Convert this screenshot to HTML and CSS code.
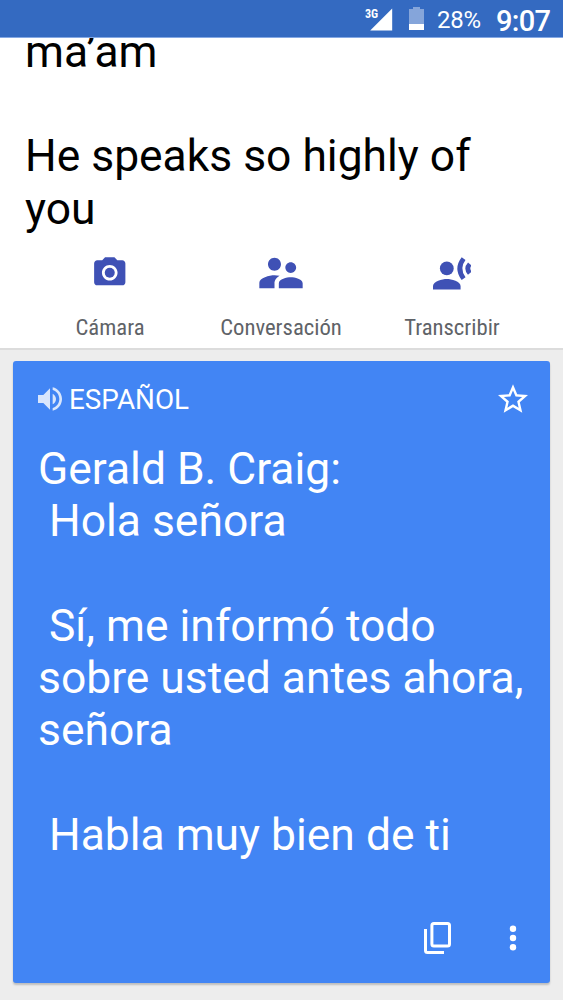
FILE: index.html
```html
<!DOCTYPE html>
<html lang="es">
<head>
<meta charset="utf-8">
<title>Traductor</title>
<link rel="stylesheet" href="styles.css">
</head>
<body>
<header class="status">
  <svg class="signal" viewBox="0 0 28 24"><path d="M27.2 .4v22H5.2z" fill="#fff"/><text class="net" x="0" y="10" textLength="13.2" lengthAdjust="spacingAndGlyphs">3G</text></svg>
  <svg class="battery" viewBox="0 0 15 23"><path d="M4 0h7v2h4v15H0V2h4z" fill="#fff" fill-opacity=".4"/><path d="M0 17h15v6H0z" fill="#fff"/></svg>
  <span class="percent">28%</span>
  <span class="clock">9:07</span>
</header>
<section class="source">
  <p class="source-text">ma’am

He speaks so highly of you</p>
  <nav class="tools">
    <div class="tool">
      <div class="tool-icon"><svg class="camera" viewBox="0 0 24 24"><circle cx="12" cy="12" r="3.2"/><path d="M9 2 7.17 4H4c-1.1 0-2 .9-2 2v12c0 1.1.9 2 2 2h16c1.1 0 2-.9 2-2V6c0-1.1-.9-2-2-2h-3.17L15 2H9zm3 15c-2.76 0-5-2.24-5-5s2.24-5 5-5 5 2.24 5 5-2.24 5-5 5z"/></svg></div>
      <span class="label">Cámara</span>
    </div>
    <div class="tool">
      <div class="tool-icon"><svg class="people" viewBox="0 0 24 24"><path d="M16.5 12c1.38 0 2.49-1.12 2.49-2.5S17.88 7 16.5 7 14 8.12 14 9.5s1.12 2.5 2.5 2.5zM9 11c1.66 0 2.99-1.34 2.99-3S10.66 5 9 5 6 6.34 6 8s1.34 3 3 3zm7.5 3c-1.83 0-5.5.92-5.5 2.75V19h11v-2.25c0-1.83-3.67-2.75-5.5-2.75zM9 13c-2.33 0-7 1.17-7 3.5V19h7v-2.25c0-.85.33-2.34 2.37-3.47C10.5 13.1 9.66 13 9 13z"/></svg></div>
      <span class="label">Conversación</span>
    </div>
    <div class="tool">
      <div class="tool-icon"><svg class="voice" viewBox="0 0 38 33"><circle cx="13.8" cy="11.4" r="6.9"/><path d="M0 32.5v-3.4c0-4.6 9.2-7 13.8-7s13.8 2.4 13.8 7v3.4z"/><path class="wave" d="M30.6 1.6Q23 11.4 30.6 21.6"/><path class="wave" d="M36.8 7Q32.8 11.4 36.8 16.2"/></svg></div>
      <span class="label">Transcribir</span>
    </div>
  </nav>
</section>
<main class="card">
  <div class="card-head">
    <svg class="speaker" viewBox="3 3 18 18"><path d="M3 9v6h4l5 5V4L7 9H3zm13.5 3c0-1.77-1.02-3.29-2.5-4.03v8.05c1.48-.73 2.5-2.25 2.5-4.02zM14 3.23v2.06c2.89.86 5 3.54 5 6.71s-2.11 5.85-5 6.71v2.06c4.01-.91 7-4.49 7-8.77s-2.99-7.86-7-8.77z"/></svg>
    <h1 class="language">ESPAÑOL</h1>
    <svg class="star" viewBox="2 2 20 19"><path d="m22 9.24-7.19-.62L12 2 9.19 8.63 2 9.24l5.46 4.73L5.82 21 12 17.27 18.18 21l-1.63-7.03L22 9.24zM12 15.4l-3.76 2.27 1-4.28-3.32-2.88 4.38-.38L12 6.1l1.71 4.04 4.38.38-3.32 2.88 1 4.28L12 15.4z"/></svg>
  </div>
  <p class="translation">Gerald B. Craig:
 Hola señora

 Sí, me informó todo
sobre usted antes ahora,
señora

 Habla muy bien de ti</p>
  <div class="actions">
    <svg class="copy" viewBox="0 0 27 32"><rect x="7.9" y="1.5" width="17.6" height="22.5" rx="2"/><path d="M1.5 7v21.5a2 2 0 0 0 2 2H20"/></svg>
    <svg class="more" viewBox="0 0 8 26"><circle cx="4" cy="3.7" r="3.2"/><circle cx="4" cy="13" r="3.2"/><circle cx="4" cy="22.3" r="3.2"/></svg>
  </div>
</main>
</body>
</html>
```
FILE: styles.css
```css
* { box-sizing: border-box; }
body {
  margin: 0;
  width: 563px;
  height: 1000px;
  overflow: hidden;
  background: #ededed;
  font-family: Roboto, sans-serif;
}
svg { display: block; flex: none; }
p, h1 { margin: 0; font-weight: 400; }
.status {
  height: 38px;
  display: flex;
  align-items: center;
  padding: 2px 13px 0 0;
  justify-content: flex-end;
  background: #346ac1;
  border-bottom: 1px solid #84a8e4;
  color: #fff;
}
.signal { width: 28px; height: 24px; margin-right: 16px; }
.net { font: 700 12.3px "Roboto Condensed", Roboto, sans-serif; fill: #fff; }
.battery { width: 15px; height: 23px; margin: -2px 13px 0 0; }
.percent { width: 44px; margin-right: 15px; font-size: 24px; letter-spacing: -.3px; line-height: 28px; padding-top: 1px; }
.clock { width: 54px; font-size: 29px; font-weight: 500; letter-spacing: -.7px; line-height: 32px; padding-top: 3px; }
.source {
  height: 312px;
  display: flex;
  flex-direction: column;
  justify-content: flex-end;
  overflow: hidden;
  background: #fff;
  border-bottom: 2px solid #dcdcdc;
}
.source-text, .translation {
  font-size: 44.4px;
  line-height: 52.3px;
  white-space: pre-wrap;
}
.source-text { padding: 0 25px; color: #000; }
.tools {
  height: 113px;
  flex: none;
  display: grid;
  grid-template-columns: 171px 171px 171px;
  justify-content: center;
  padding-right: 2px;
}
.tool { display: flex; flex-direction: column; align-items: center; }
.tool-icon { height: 76px; display: flex; align-items: center; fill: #3f51b5; }
.camera { width: 37.5px; height: 37.5px; }
.people { width: 52px; height: 52px; }
.voice { width: 38px; height: 33px; }
.wave { fill: none; stroke: #3f51b5; stroke-width: 4.8; }
.label { margin-top: 2px; padding-left: 1px; font-family: "Roboto Condensed", Roboto, sans-serif; font-size: 22.7px; line-height: 30px; color: #5f6368; }
.card {
  height: 622px;
  margin: 11px 12.6px 0 12.6px;
  padding: 24px 22.4px 0 25.4px;
  border-radius: 3px;
  background: #4285f4;
  box-shadow: 0 2px 2px rgba(0, 0, 0, .2);
  color: #fff;
}
.card-head { display: flex; align-items: center; height: 30px; }
.speaker { width: 24px; height: 24px; margin-bottom: 2px; fill: #fff; opacity: .8; }
.language { margin-left: 7px; font-size: 27.8px; line-height: 30px; }
.star { width: 30px; height: 29px; margin: 0 0 4px auto; fill: #fff; }
.translation { margin-top: 28px; }
.actions { display: flex; justify-content: flex-end; align-items: center; gap: 58px; height: 34px; margin-top: 60px; padding-right: 11px; }
.copy { width: 27px; height: 32px; fill: none; stroke: #fff; stroke-width: 3; }
.more { width: 8px; height: 26px; fill: #fff; }
```
